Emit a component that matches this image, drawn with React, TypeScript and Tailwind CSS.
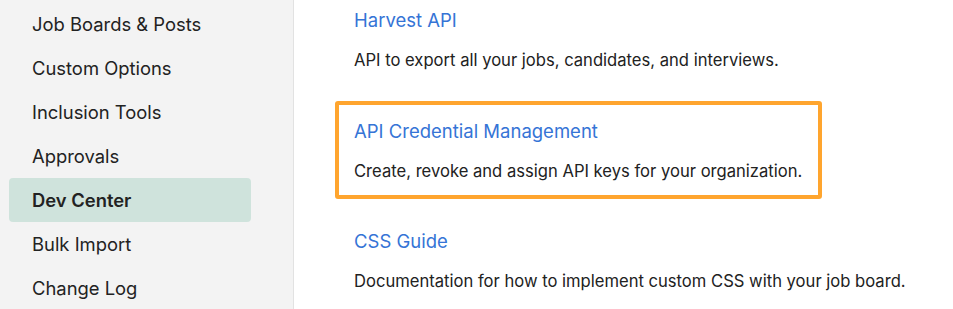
export default function App() {
  const items = [
    "Job Boards & Posts",
    "Custom Options",
    "Inclusion Tools",
    "Approvals",
    "Dev Center",
    "Bulk Import",
    "Change Log",
  ];

  return (
    <div
      className="flex h-[309px] w-[953px] overflow-hidden bg-white text-[#222222]"
      style={{ fontFamily: "Inter, 'Noto Sans', sans-serif" }}
    >
      {/* Sidebar */}
      <nav className="w-[294px] shrink-0 border-r border-[#e2e2e2] bg-[#f3f3f3] pt-[2px] pl-[9px]">
        {items.map((item) => (
          <div
            key={item}
            className={`flex h-[44px] w-[242px] items-center rounded-[4px] pt-[2px] pl-[23px] text-[18.4px] ${
              item === "Dev Center" ? "bg-[#cfe3dc] font-semibold" : ""
            }`}
          >
            {item}
          </div>
        ))}
      </nav>

      {/* Main */}
      <main className="flex flex-col whitespace-nowrap pt-[8px] pl-[41px]">
        <div className="pl-[19px]">
          <a className="block text-[18.5px] leading-[24px] text-[#3574d6]">Harvest API</a>
          <p className="mt-4 text-[16.6px] leading-[24px]">
            API to export all your jobs, candidates, and interviews.
          </p>
        </div>

        <div className="mt-[29px] w-[487px] rounded-[3px] border-4 border-[#ffa52e] pt-[14px] pb-[12px] pl-[15px]">
          <a className="block text-[18.5px] leading-[24px] text-[#3574d6]">API Credential Management</a>
          <p className="mt-4 text-[16.6px] leading-[24px]">
            Create, revoke and assign API keys for your organization.
          </p>
        </div>

        <div className="mt-[30px] pl-[19px]">
          <a className="block text-[18.5px] leading-[24px] text-[#3574d6]">CSS Guide</a>
          <p className="mt-4 text-[16.6px] leading-[24px]">
            Documentation for how to implement custom CSS with your job board.
          </p>
        </div>
      </main>
    </div>
  );
}
